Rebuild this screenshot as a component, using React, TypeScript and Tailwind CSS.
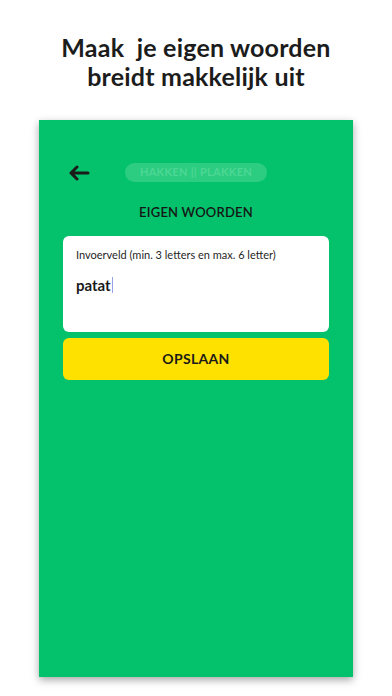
import React from "react";

function BackArrow() {
  return (
    <svg width="22" height="16" viewBox="0 0 22 16" fill="none">
      <path
        d="M20 8H3M9 2L3 8l6 6"
        stroke="#1a1a1a"
        strokeWidth="3"
        strokeLinecap="round"
        strokeLinejoin="round"
      />
    </svg>
  );
}

export default function App() {
  return (
    <div className="w-[392px] h-[696px] bg-white overflow-hidden font-['Lato','Noto_Sans',sans-serif]">
      <div className="pt-[33px] text-center text-[25px] leading-[29px] font-bold text-[#1c1c1c] tracking-[0.2px]">
        <div>Maak &nbsp;je eigen woorden</div>
        <div>breidt makkelijk uit</div>
      </div>

      <div className="ml-[39px] mt-[29px] w-[314px] h-[557px] bg-[#03c26b] shadow-[0_3px_8px_rgba(0,0,0,0.35)] px-6 pt-[43px] flex flex-col">
        <div className="relative h-[19px] flex justify-center">
          <div className="absolute left-[5px] top-[2px]">
            <BackArrow />
          </div>
          <div className="w-[142px] h-[19px] rounded-full bg-[#2ccd80] flex items-center justify-center text-[11px] font-bold text-[#4dd796] tracking-[0.3px]">
            HAKKEN || PLAKKEN
          </div>
        </div>

        <div className="mt-[21px] text-center text-[13px] font-semibold text-[#161616] tracking-[0.2px]">
          EIGEN WOORDEN
        </div>

        <div className="mt-[13px] h-[96px] bg-white rounded-[6px] px-[13px] pt-[11px]">
          <div className="text-[11px] text-[#1f1f1f]">
            Invoerveld (min. 3 letters en max. 6 letter)
          </div>
          <div className="mt-[11px] flex items-center text-[15px] font-bold text-[#1a1a1a]">
            patat
            <span className="ml-[1px] inline-block w-px h-[16px] bg-[#9aa0e8]" />
          </div>
        </div>

        <button className="mt-[6px] w-full h-[42px] rounded-[6px] bg-[#ffe100] text-[14px] font-bold text-[#1a1a1a] tracking-[0.3px]">
          OPSLAAN
        </button>
      </div>
    </div>
  );
}
